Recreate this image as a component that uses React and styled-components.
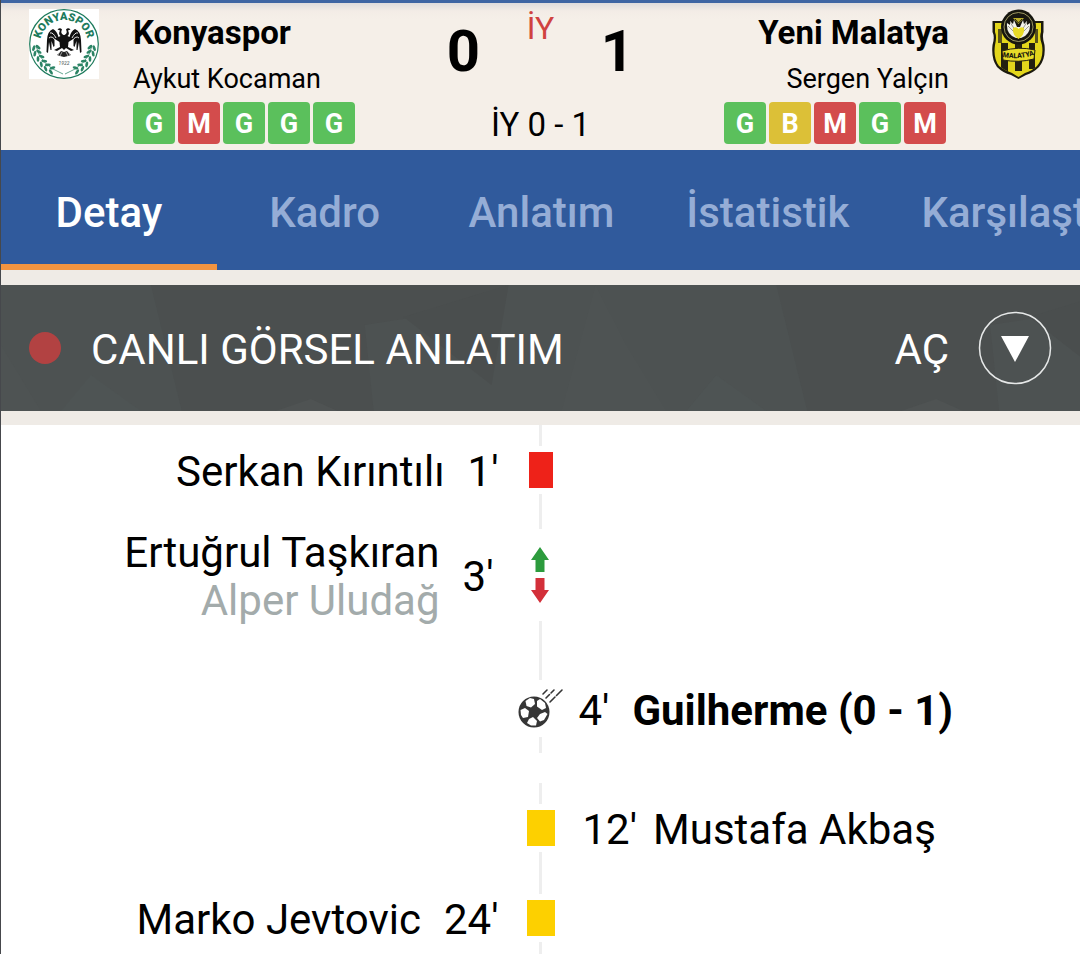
import React, { useState } from "react";
import styled, { createGlobalStyle } from "styled-components";

const GlobalStyle = createGlobalStyle`
  * {
    box-sizing: border-box;
  }
  body {
    margin: 0;
    background: #ffffff;
    color: #000000;
    font-family: Roboto, "Liberation Sans", sans-serif;
    overflow-x: hidden;
  }
  h1, p, ul, ol {
    margin: 0;
    padding: 0;
    list-style: none;
  }
  button {
    font-family: inherit;
    border: none;
    background: none;
    padding: 0;
    margin: 0;
    cursor: pointer;
  }
`;

const Page = styled.main`
  min-height: 100vh;
  border-left: 1px solid #46484c;
  background: #ffffff;
  overflow: hidden;
`;

const Header = styled.header`
  display: grid;
  grid-template-columns: 1fr auto 1fr;
  padding: 6px 28px;
  border-top: 3px solid #3e65a3;
  background: linear-gradient(#dfdcdc 0, #f3ece6 8px, #f5efe8 16px);
`;

const Team = styled.section`
  display: flex;
  flex-direction: ${(props) => (props.$away ? "row-reverse" : "row")};
  gap: ${(props) => (props.$away ? "33px" : "34px")};
  text-align: ${(props) => (props.$away ? "right" : "left")};
  .logo {
    flex: none;
    width: 70px;
    height: 70px;
  }
`;

const TeamInfo = styled.div`
  display: flex;
  flex-direction: column;
  .name {
    font-size: 33px;
    line-height: 48px;
    font-weight: 700;
  }
  .coach {
    font-size: 27px;
    line-height: 44px;
    padding-bottom: 1px;
  }
`;

const Form = styled.ul`
  display: flex;
  justify-content: ${(props) => (props.$away ? "flex-end" : "flex-start")};
`;

const resultColors = { G: "#5bc05c", M: "#d34c4c", B: "#dcc037" };

const Result = styled.li`
  width: 42px;
  height: 42px;
  margin-right: 3px;
  border-radius: 4px;
  background: ${(props) => resultColors[props.$result]};
  color: #ffffff;
  font-size: 27px;
  line-height: 44px;
  font-weight: 700;
  text-align: center;
`;

const Score = styled.section`
  display: grid;
  grid-template-columns: 77px 77px 77px;
  grid-template-rows: 97px auto;
  text-align: center;
  .goals {
    font-size: 58px;
    line-height: 84px;
    font-weight: 700;
  }
  .status {
    font-size: 32px;
    line-height: 38px;
    color: #d0423f;
  }
  .half {
    grid-column: 1 / 4;
    font-size: 33px;
    line-height: 38px;
  }
`;

const Tabs = styled.nav`
  display: flex;
  background: #305a9c;
  overflow: hidden;
`;

const Tab = styled.button`
  flex: none;
  min-width: 20%;
  height: 120px;
  padding: 10px 36px 0;
  border-bottom: 6px solid
    ${(props) => (props.$active ? "#f29440" : "transparent")};
  color: ${(props) => (props.$active ? "#ffffff" : "#95add6")};
  font-size: 42px;
  font-weight: 500;
`;

const Banner = styled.section`
  position: relative;
  display: flex;
  align-items: center;
  height: 126px;
  margin: 15px 0 14px;
  padding: 0 28px;
  background: #4d5252;
  box-shadow: 0 0 0 15px #efebe6;
  color: #ffffff;
  font-size: 42px;
  .texture {
    position: absolute;
    inset: 0;
    width: 100%;
    height: 100%;
  }
`;

const LiveDot = styled.span`
  position: relative;
  width: 32px;
  height: 32px;
  margin-right: 30px;
  border-radius: 50%;
  background: #b24242;
`;

const BannerTitle = styled.p`
  position: relative;
  flex: 1;
  padding-top: 3px;
`;

const OpenButton = styled.button`
  position: relative;
  display: flex;
  align-items: center;
  gap: 29px;
  color: #ffffff;
  font-size: 42px;
  span {
    padding-top: 3px;
  }
  svg {
    width: 74px;
    height: 74px;
  }
`;

const Timeline = styled.ol`
  position: relative;
  background: #ffffff;
`;

const Row = styled.li`
  display: grid;
  grid-template-columns: 1fr auto 1fr;
  height: ${(props) => props.$height}px;
`;

const Side = styled.div`
  display: flex;
  align-items: center;
  justify-content: ${(props) => (props.$away ? "flex-start" : "flex-end")};
  gap: ${(props) => (props.$tight ? "16px" : "23px")};
  padding-top: 3px;
  font-size: 42px;
  line-height: 48px;
  white-space: nowrap;
`;

const Names = styled.div`
  text-align: right;
`;

const Player = styled.p`
  font-weight: ${(props) => (props.$goal ? 700 : 400)};
`;

const PlayerOut = styled.p`
  color: #a3abab;
`;

const markerWidths = { card: 84, swap: 94, goal: 76 };

const Marker = styled.div`
  display: flex;
  flex-direction: column;
  align-items: center;
  width: ${(props) => markerWidths[props.$kind]}px;
`;

const Line = styled.span`
  flex: ${(props) => (props.$short ? "0 0 16px" : "1")};
  width: 3px;
  margin-bottom: ${(props) => (props.$short ? "30px" : "0")};
  background: #eeeeee;
`;

const Card = styled.span`
  width: ${(props) => (props.$red ? "24px" : "28px")};
  height: 36px;
  margin: 6px 0;
  background: ${(props) => (props.$red ? "#ee2219" : "#fdd000")};
`;

const SwapIcon = styled.svg`
  width: 20px;
  height: 60px;
  margin: 16px 0;
`;

const BallIcon = styled.svg`
  width: 46px;
  height: 40px;
  margin: 8px 0 9px;
`;

function KonyaLogo() {
  // laurel leaves follow the lower half of the ring on both sides
  const leaves = [
    [7, 39, 75],
    [8, 44, 65],
    [11, 49, 55],
    [14, 54, 42],
    [18, 58, 30],
    [23, 61, 20],
  ];
  return (
    <svg className="logo" viewBox="0 0 70 70" role="img" aria-label="Konyaspor">
      <rect width="70" height="70" fill="#ffffff" />
      <circle cx="35" cy="35" r="34.3" fill="none" stroke="#1d7b5c" strokeWidth="1.2" />
      <path id="konya-arc" d="M11 35 A24 24 0 0 1 59 35" fill="none" />
      <text fill="#1d7b5c" fontSize="11" fontWeight="900" textAnchor="middle">
        <textPath href="#konya-arc" startOffset="50%">
          KONYASPOR
        </textPath>
      </text>
      {[0, 1].map((side) => (
        <g key={side} transform={side ? "translate(70 0) scale(-1 1)" : undefined}>
          <path d="M7 37 Q11 56 34 65" fill="none" stroke="#3b8e72" strokeWidth="0.8" />
          {leaves.map(([x, y, angle]) => (
            <g key={x} fill="#2b8465" transform={`translate(${x} ${y}) rotate(${angle})`}>
              <ellipse cx="1" cy="-2" rx="3" ry="1.4" transform="rotate(-35)" />
              <ellipse cx="1" cy="2" rx="3" ry="1.4" transform="rotate(35)" />
            </g>
          ))}
          <path
            d="M34.5 26 Q31 24 33 20.500 Q31 18 28.500 20.500 L31 21.500 Q29 25 31.500 27 L29.500 28 Q28 22 24 20 Q18.500 22 18 31 L17.500 43 L19 44 L20 33 L21.500 41 L22.500 41 L22.500 32 L24.500 38 L25.500 37 L25.500 30 L29 32 L30.500 33 L31 38 L25 41 L28 42 L33 39 L35 41 V26 Z"
            fill="#111111"
          />
          <path d="M35 43 L32 42 L28 46 L31 47 L35 48 Z" fill="#222222" />
          <path d="M33 43 L31 47 M31 42 L29 46" stroke="#ffffff" strokeWidth="0.6" />
          <path d="M21 24 Q24 23 27 29 M20 29 Q23 26 27 32" fill="none" stroke="#ffffff" strokeWidth="0.9" />
        </g>
      ))}
      <text x="35" y="56" fill="#4c5652" fontSize="5" fontStyle="italic" textAnchor="middle">
        1922
      </text>
    </svg>
  );
}

function MalatyaLogo() {
  return (
    <svg className="logo" viewBox="0 0 70 70" role="img" aria-label="Yeni Malatya">
      <defs>
        <clipPath id="malatya-shield">
          <path d="M13 14 H59 V23 Q57 28 60 36 Q62 49 55 57 Q50 62 43 64 L36.500 68 L30 64 Q23 62 17 57 Q11 49 13 36 Q15 28 13 23 Z" />
        </clipPath>
        <path id="malatya-arc" d="M21 48 Q36.500 51 52 46" />
      </defs>
      <path
        d="M10.500 12 H61.500 V23 Q60 28 62.500 36 Q64 50 57 58 Q51 64 44 66 L36.500 70 L29 66 Q21 64 15 58 Q9 50 10.500 36 Q13 28 10.500 23 Z"
        fill="#1c1a0e"
      />
      <g clipPath="url(#malatya-shield)">
        <rect x="10" y="10" width="54" height="60" fill="#e3d61c" />
        <path d="M19 34 H26 V64 H19 Z M33 35 H40 V62 H33 Z M47 34 H53 V60 H47 Z" fill="#242110" />
        <path d="M16 20 L20 20 V34 H16 Z M53 20 L56 20 V34 H53 Z" fill="#57501a" />
      </g>
      <path d="M20 42 Q36.500 37 53 41 L52 50 Q36.500 54 21 51 Z" fill="#e8db28" stroke="#242110" strokeWidth="1" />
      <text fill="#1c1a0e" fontSize="7" fontWeight="900" textAnchor="middle">
        <textPath href="#malatya-arc" startOffset="50%">
          MALATYA
        </textPath>
      </text>
      <circle cx="36.500" cy="18" r="17.500" fill="#17160f" />
      <circle cx="36.500" cy="18" r="14.500" fill="none" stroke="#aaa56a" strokeWidth="0.9" />
      <path
        d="M34 29 Q24 26 25 14 L28 16 L28 12 L31 15 L32 11 L35 18 H38 L41 11 L42 15 L45 12 L45 16 L48 14 Q49 26 39 29 Z"
        fill="#f2f2ea"
      />
      <path d="M26 17 L32 23 M28 13 L33 21 M47 17 L41 23 M45 13 L40 21" stroke="#77756a" strokeWidth="0.7" />
      <path d="M31 19 Q34 17 36.500 20 Q39 17 42 19 Q43 26 36.500 30 Q30 26 31 19 Z" fill="#e8db28" />
      <path d="M31 9 H42 L36.500 15 Z" fill="#b9ae2a" />
      <path d="M33 10 L36.500 14 L40 10" fill="none" stroke="#25220f" strokeWidth="1" />
    </svg>
  );
}

function BannerTexture() {
  return (
    <svg className="texture" viewBox="0 0 1080 126" preserveAspectRatio="none" aria-hidden="true">
      {[0, 626].map((x) => (
        <g key={x} transform={`translate(${x} 0)`}>
          <path d="M150 0 L181 126 H373 L364 40 L403 34 L508 0 Z" fill="#4b4f4f" />
          <path d="M403 32 L508 0 L491 100 Z" fill="#4a4e4e" />
          <path d="M275 126 L310 114 L337 126 Z" fill="#4f5353" />
          <path d="M90 90 L140 126 H60 Z" fill="#4e5454" />
          <path d="M-31 0 L-65 126 H40 L0 60 Z" fill="#4e5353" />
        </g>
      ))}
    </svg>
  );
}

function EventMarker({ type }) {
  if (type === "swap") {
    return (
      <SwapIcon viewBox="0 0 20 60" role="img" aria-label="Oyuncu değişikliği">
        <path d="M9 2 L18 15 H13.500 V27 H4.500 V15 H0 Z" fill="#2c9b3d" />
        <path d="M9 58 L18 45 H13.500 V33 H4.500 V45 H0 Z" fill="#d3303a" />
      </SwapIcon>
    );
  }
  if (type === "goal") {
    return (
      <BallIcon viewBox="0 0 46 40" role="img" aria-label="Gol">
        <circle cx="16" cy="24" r="15.500" fill="#363636" />
        <g fill="#ffffff">
          <path d="M7.500 13 L12 10 L16 11 L17 16 L13 19.500 L8.500 18 Z" />
          <path d="M19 13 L22 11 L27 15 L28 20 L24 22 L19 18.500 Z" />
          <path d="M2.500 22 L7 20 L11 23 L10 29 L5 30 L3 27 Z" />
          <path d="M22 26 L27 24 L29.500 26 L26 32 L22 33.500 L19 30 Z" />
          <path d="M11 31 L15 29 L19 33 L18 37.500 L13 37.500 L9 35 Z" />
        </g>
        <path
          d="M25 6 L29 2 M28 10 L31.500 6.500 M33 5 L36 2 M32 14 L37 9 M38.500 7.500 L44 2"
          stroke="#363636"
          strokeWidth="1.600"
          strokeLinecap="round"
        />
      </BallIcon>
    );
  }
  return (
    <Card
      $red={type === "red"}
      role="img"
      aria-label={type === "red" ? "Kırmızı kart" : "Sarı kart"}
    />
  );
}

const tabs = ["Detay", "Kadro", "Anlatım", "İstatistik", "Karşılaştırma"];

const events = [
  { type: "red", minute: "1'", player: "Serkan Kırıntılı", height: 90 },
  { type: "swap", minute: "3'", player: "Ertuğrul Taşkıran", out: "Alper Uludağ", height: 120 },
  { type: "goal", minute: "4'", player: "Guilherme (0 - 1)", away: true, height: 148 },
  { type: "yellow", minute: "12'", player: "Mustafa Akbaş", away: true, height: 90 },
  { type: "yellow", minute: "24'", player: "Marko Jevtovic", height: 90 },
];

function MatchEvent({ event }) {
  const { type, minute, player, out, away, height } = event;
  const isGoal = type === "goal";
  const kind = type === "swap" || isGoal ? type : "card";
  const names = (
    <Names>
      <Player $goal={isGoal}>{player}</Player>
      {out && <PlayerOut>{out}</PlayerOut>}
    </Names>
  );
  return (
    <Row $height={height}>
      <Side>
        {!away && names}
        {!away && <time>{minute}</time>}
      </Side>
      <Marker $kind={kind}>
        <Line />
        <EventMarker type={type} />
        <Line $short={isGoal} />
      </Marker>
      <Side $away $tight={!isGoal}>
        {away && <time>{minute}</time>}
        {away && names}
      </Side>
    </Row>
  );
}

function TeamPanel({ name, coach, form, logo, away }) {
  return (
    <Team $away={away}>
      {logo}
      <TeamInfo>
        <p className="name">{name}</p>
        <p className="coach">{coach}</p>
        <Form $away={away}>
          {form.split("").map((result, index) => (
            <Result key={index} $result={result}>
              {result}
            </Result>
          ))}
        </Form>
      </TeamInfo>
    </Team>
  );
}

export default function App() {
  const [activeTab, setActiveTab] = useState("Detay");

  return (
    <Page>
      <GlobalStyle />
      <Header>
        <TeamPanel name="Konyaspor" coach="Aykut Kocaman" form="GMGGG" logo={<KonyaLogo />} />
        <Score>
          <p className="goals">0</p>
          <p className="status">İY</p>
          <p className="goals">1</p>
          <p className="half">İY 0 - 1</p>
        </Score>
        <TeamPanel name="Yeni Malatya" coach="Sergen Yalçın" form="GBMGM" logo={<MalatyaLogo />} away />
      </Header>
      <Tabs>
        {tabs.map((tab) => (
          <Tab key={tab} $active={tab === activeTab} onClick={() => setActiveTab(tab)}>
            {tab}
          </Tab>
        ))}
      </Tabs>
      <Banner>
        <BannerTexture />
        <LiveDot />
        <BannerTitle>CANLI GÖRSEL ANLATIM</BannerTitle>
        <OpenButton>
          <span>AÇ</span>
          <svg viewBox="0 0 74 74" aria-hidden="true">
            <circle cx="37" cy="37" r="35.500" fill="none" stroke="#e6e8e8" strokeWidth="1.500" />
            <path d="M23 25 H51 L37 51 Z" fill="#ffffff" />
          </svg>
        </OpenButton>
      </Banner>
      <Timeline>
        {events.map((event) => (
          <MatchEvent key={event.minute} event={event} />
        ))}
      </Timeline>
    </Page>
  );
}
